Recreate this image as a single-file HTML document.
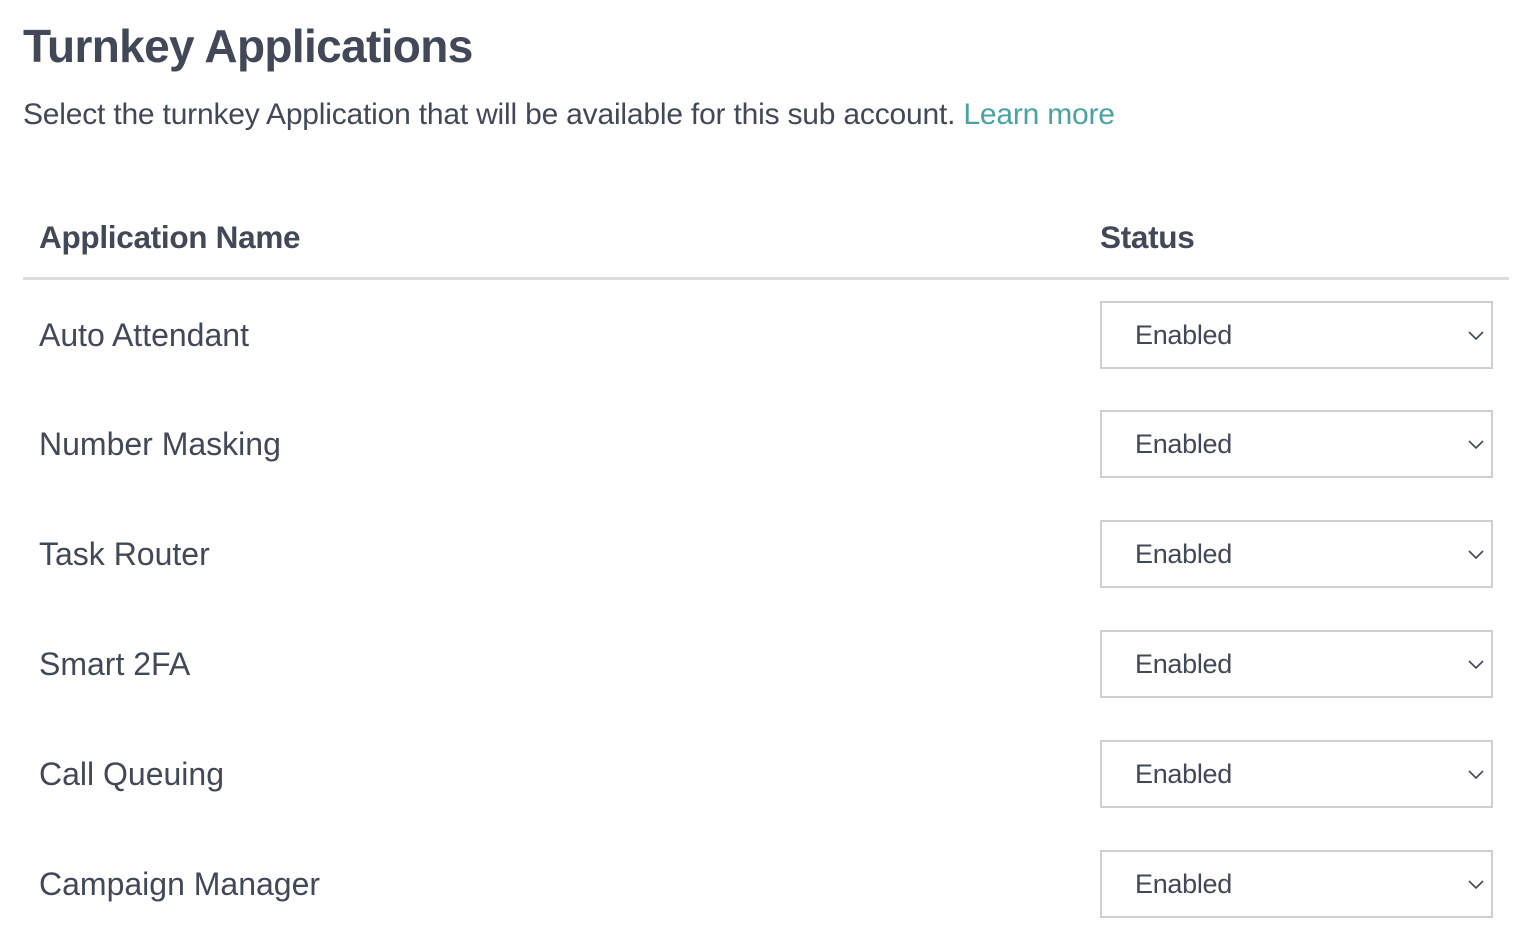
<!DOCTYPE html>
<html><head><meta charset="utf-8"><style>
*{margin:0;padding:0;box-sizing:border-box}
body{width:1540px;height:946px;background:#fff;font-family:"Liberation Sans",sans-serif;color:#424857;position:relative;overflow:hidden}
h1{position:absolute;left:23px;top:18px;font-size:46px;font-weight:bold;letter-spacing:-0.65px;line-height:56px}
.sub{position:absolute;left:23px;top:98px;font-size:30px;line-height:34px;color:#424857;letter-spacing:-0.2px}
.sub a{color:#4aa3a0;text-decoration:none}
.th{position:absolute;top:219px;font-size:31.5px;font-weight:bold;line-height:36px;letter-spacing:-0.3px}
.line{position:absolute;left:23px;top:277px;width:1486px;height:3px;background:#dcdcdc}
.lbl{position:absolute;left:39px;font-size:32px;line-height:36px}
.sel{position:absolute;left:1100px;width:393px;height:68px;border:2px solid #cfcfcf;background:#fff}
.sel span{position:absolute;left:33px;top:15px;font-size:27px;line-height:34px;letter-spacing:-0.3px}
.sel svg{position:absolute;right:6px;top:26px}
</style></head><body>
<h1>Turnkey Applications</h1>
<div class="sub">Select the turnkey Application that will be available for this sub account. <a>Learn more</a></div>
<div class="th" style="left:39px">Application Name</div>
<div class="th" style="left:1100px">Status</div>
<div class="line"></div>

<div class="lbl" style="top:317px">Auto Attendant</div>
<div class="sel" style="top:301px"><span>Enabled</span><svg width="18" height="12" viewBox="0 0 18 12"><path d="M2 3l7 7 7-7" fill="none" stroke="#424857" stroke-width="1.6"/></svg></div>
<div class="lbl" style="top:426px">Number Masking</div>
<div class="sel" style="top:410px"><span>Enabled</span><svg width="18" height="12" viewBox="0 0 18 12"><path d="M2 3l7 7 7-7" fill="none" stroke="#424857" stroke-width="1.6"/></svg></div>
<div class="lbl" style="top:536px">Task Router</div>
<div class="sel" style="top:520px"><span>Enabled</span><svg width="18" height="12" viewBox="0 0 18 12"><path d="M2 3l7 7 7-7" fill="none" stroke="#424857" stroke-width="1.6"/></svg></div>
<div class="lbl" style="top:646px">Smart 2FA</div>
<div class="sel" style="top:630px"><span>Enabled</span><svg width="18" height="12" viewBox="0 0 18 12"><path d="M2 3l7 7 7-7" fill="none" stroke="#424857" stroke-width="1.6"/></svg></div>
<div class="lbl" style="top:756px">Call Queuing</div>
<div class="sel" style="top:740px"><span>Enabled</span><svg width="18" height="12" viewBox="0 0 18 12"><path d="M2 3l7 7 7-7" fill="none" stroke="#424857" stroke-width="1.6"/></svg></div>
<div class="lbl" style="top:866px">Campaign Manager</div>
<div class="sel" style="top:850px"><span>Enabled</span><svg width="18" height="12" viewBox="0 0 18 12"><path d="M2 3l7 7 7-7" fill="none" stroke="#424857" stroke-width="1.6"/></svg></div>
</body></html>
